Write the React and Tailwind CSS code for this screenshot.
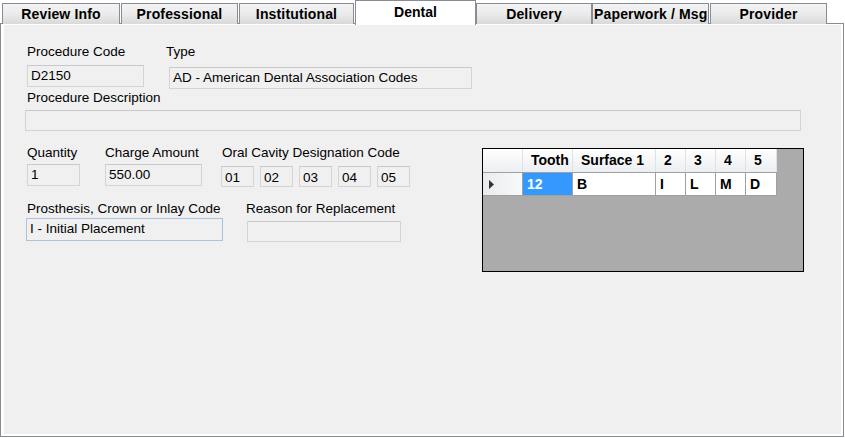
import React from "react";

function Tab({ label, className = "", active = false, left = false }) {
  if (active) {
    return (
      <div
        className={`relative z-10 h-[25px] -mb-[2px] bg-white border border-b-0 border-[#898c95] flex items-start justify-center pt-[1px] text-[14px] font-bold whitespace-nowrap overflow-hidden ${className}`}
      >
        {label}
      </div>
    );
  }
  return (
    <div
      className={`mt-[3px] h-[21px] border border-b-0 border-[#898c95] bg-gradient-to-b from-[#f3f3f3] via-[#ebebeb] to-[#d9d9d9] flex items-center ${
        left ? "justify-start pl-[1px]" : "justify-center"
      } text-[14px] font-bold tracking-[0.15px] whitespace-nowrap overflow-hidden ${className}`}
    >
      {label}
    </div>
  );
}

function Box({ children, className = "" }) {
  return (
    <div
      className={`border border-[#d4d4d4] border-t-[#c9c9c9] bg-[#f0f0f0] flex items-center pl-[3px] text-[13.5px] leading-none whitespace-nowrap overflow-hidden ${className}`}
    >
      {children}
    </div>
  );
}

function Label({ children, className = "" }) {
  return (
    <div className={`h-[16px] leading-[16px] text-[13.5px] whitespace-nowrap ${className}`}>
      {children}
    </div>
  );
}

function HeadCell({ children, className = "" }) {
  return (
    <div
      className={`h-full border-r border-[#dfe1e5] bg-gradient-to-b from-[#ffffff] to-[#eceef2] flex items-center pl-[8px] font-bold text-[14px] whitespace-nowrap overflow-hidden ${className}`}
    >
      {children}
    </div>
  );
}

function DataCell({ children, className = "" }) {
  return (
    <div
      className={`h-full border-r border-[#a0a0a0] bg-white flex items-center pl-[4px] font-bold text-[14px] whitespace-nowrap overflow-hidden ${className}`}
    >
      {children}
    </div>
  );
}

export default function App() {
  return (
    <div className="w-[845px] h-[438px] bg-white text-black overflow-hidden font-['Liberation_Sans',Arial,sans-serif]">
      {/* Tabs */}
      <div className="flex items-start h-[23px] pl-[2px]">
        <Tab label="Review Info" className="w-[118px]" />
        <Tab label="Professional" className="ml-[1px] w-[117px]" />
        <Tab label="Institutional" className="ml-[1px] w-[115px]" />
        <Tab label="Dental" active className="ml-[1px] w-[121px]" />
        <Tab label="Delivery" className="w-[116px]" />
        <Tab label="Paperwork / Msg" left className="w-[117px]" />
        <Tab label="Provider" className="ml-[1px] w-[117px]" />
      </div>

      {/* Panel */}
      <div className="w-[844px] h-[414px] border border-[#898c95] bg-white pt-[1px] pl-[3px] pr-[2px] pb-[2px]">
        <div className="h-full bg-[#f0f0f0] pt-[19px]">
          {/* Row A */}
          <div className="flex items-start">
            <div className="ml-[23px] flex flex-col">
              <Label>Procedure Code</Label>
              <Box className="mt-[5px] w-[117px] h-[22px]">D2150</Box>
            </div>
            <div className="ml-[22px] flex flex-col">
              <Label>Type</Label>
              <Box className="ml-[3px] mt-[7px] w-[303px] h-[22px]">
                AD - American Dental Association Codes
              </Box>
            </div>
          </div>

          {/* Row B */}
          <Label className="ml-[23px] mt-[1px]">Procedure Description</Label>
          <Box className="ml-[21px] mt-[4px] w-[776px] h-[21px]" />

          {/* Row C */}
          <div className="flex items-start mt-[14px]">
            <div className="ml-[23px] w-[400px] flex flex-col">
              <div className="flex items-start">
                <div className="flex flex-col">
                  <Label>Quantity</Label>
                  <Box className="mt-[3px] w-[53px] h-[22px]">1</Box>
                </div>
                <div className="ml-[25px] flex flex-col">
                  <Label>Charge Amount</Label>
                  <Box className="mt-[3px] w-[97px] h-[22px]">550.00</Box>
                </div>
                <div className="ml-[20px] flex flex-col">
                  <Label>Oral Cavity Designation Code</Label>
                  <div className="-ml-[1px] mt-[5px] flex gap-[6px]">
                    {["01", "02", "03", "04", "05"].map((c) => (
                      <Box key={c} className="w-[33px] h-[21px] pt-[2px]">
                        {c}
                      </Box>
                    ))}
                  </div>
                </div>
              </div>

              <div className="flex items-start mt-[14px]">
                <div className="flex flex-col">
                  <Label>Prosthesis, Crown or Inlay Code</Label>
                  <div className="-ml-[1px] mt-[1px] w-[197px] h-[23px] border border-[#a9c4dc] bg-[#f0f0f0] flex items-center pl-[3px] text-[13.5px] whitespace-nowrap">
                    I - Initial Placement
                  </div>
                </div>
                <div className="ml-[23px] flex flex-col">
                  <Label>Reason for Replacement</Label>
                  <Box className="ml-[1px] mt-[4px] w-[154px] h-[21px]" />
                </div>
              </div>
            </div>

            {/* Grid */}
            <div className="ml-[55px] mt-[3px] w-[322px] h-[124px] border border-black bg-[#ababab] flex flex-col">
              <div className="flex h-[24px] w-[294px] border-b border-[#a0a0a0]">
                <HeadCell className="w-[40px]" />
                <HeadCell className="w-[50px]">Tooth</HeadCell>
                <HeadCell className="w-[83px]">Surface 1</HeadCell>
                <HeadCell className="w-[30px]">2</HeadCell>
                <HeadCell className="w-[30px]">3</HeadCell>
                <HeadCell className="w-[30px]">4</HeadCell>
                <HeadCell className="w-[31px]">5</HeadCell>
              </div>
              <div className="flex h-[23px] w-[294px] border-b border-[#a0a0a0]">
                <div className="w-[40px] h-full border-r border-[#a0a0a0] bg-gradient-to-r from-[#e9ebef] to-[#f8f9fa] flex items-center pl-[6px]">
                  <svg width="5" height="9" viewBox="0 0 5 9">
                    <polygon points="0,0 5,4.5 0,9" fill="#333" />
                  </svg>
                </div>
                <DataCell className="w-[50px] !bg-[#3399ff] text-white">12</DataCell>
                <DataCell className="w-[83px]">B</DataCell>
                <DataCell className="w-[30px]">I</DataCell>
                <DataCell className="w-[30px]">L</DataCell>
                <DataCell className="w-[30px]">M</DataCell>
                <DataCell className="w-[31px]">D</DataCell>
              </div>
            </div>
          </div>
        </div>
      </div>
    </div>
  );
}
